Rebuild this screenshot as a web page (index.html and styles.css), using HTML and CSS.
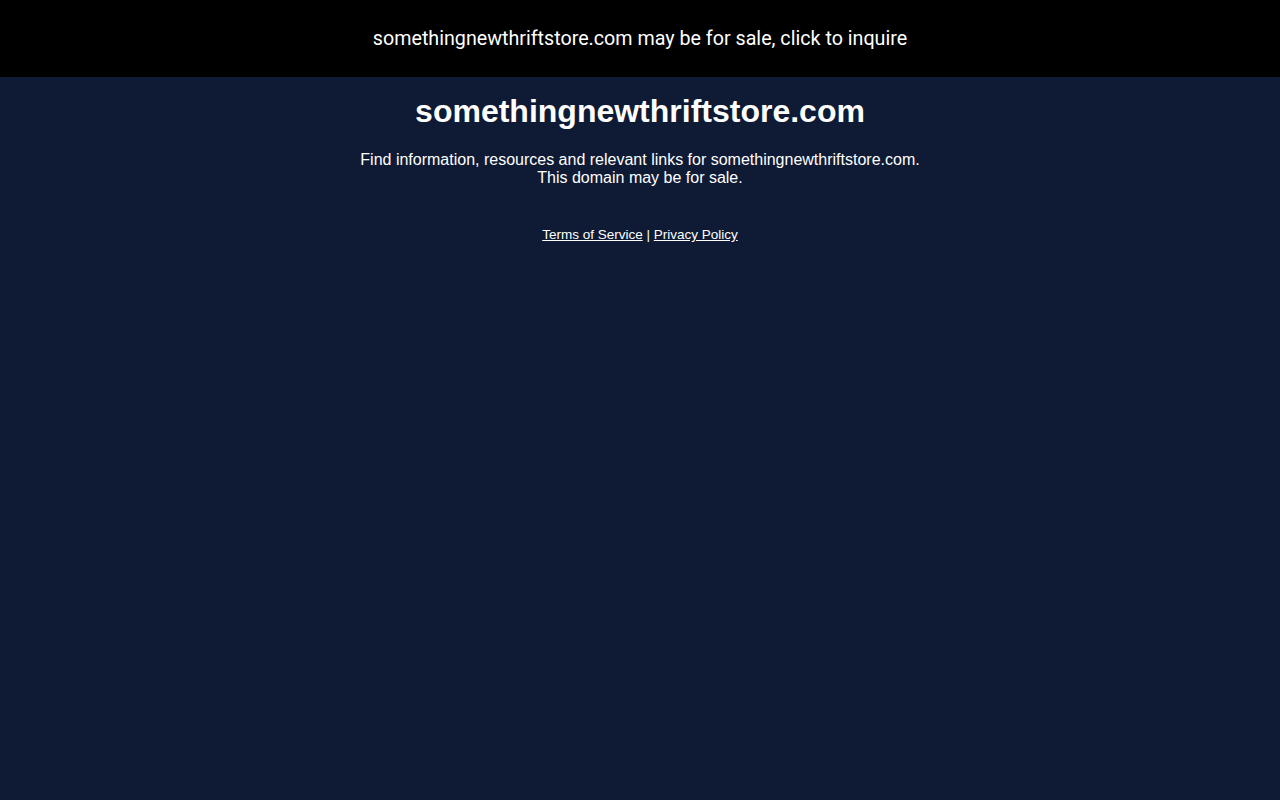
FILE: index.html
```
<!DOCTYPE html>
<html>
<head>
<meta charset="utf-8">
<link rel="stylesheet" href="styles.css">
</head>
<body>
<div class="topbar">somethingnewthriftstore.com may be for sale, click to inquire</div>
<div class="main">
<h1 class="title">somethingnewthriftstore.com</h1>
<p class="desc">Find information, resources and relevant links for somethingnewthriftstore.com.<br>This domain may be for sale.</p>
<div class="links"><a href="#">Terms of Service</a> | <a href="#">Privacy Policy</a></div>
</div>
</body>
</html>
```
FILE: styles.css
```
html, body {
  margin: 0;
  padding: 0;
  background: #0f1b35;
  min-height: 100%;
}
body {
  font-family: "Liberation Sans", Arial, sans-serif;
  color: #fff;
  height: 800px;
}
.topbar {
  background: #000;
  height: 77px;
  display: flex;
  align-items: center;
  justify-content: center;
  font-family: Roboto, "Liberation Sans", sans-serif;
  font-size: 19.7px;
  padding-bottom: 1px;
  box-sizing: border-box;
  color: #fff;
}
.main {
  text-align: center;
}
.title {
  margin: 0;
  padding-top: 16px;
  font-size: 32px;
  font-weight: bold;
  line-height: 37px;
}
.desc {
  margin: 21px 0 0;
  font-size: 16px;
  line-height: 18px;
}
.links {
  margin-top: 40px;
  font-size: 13.5px;
  line-height: 15px;
}
.links a {
  color: #fff;
}
```
